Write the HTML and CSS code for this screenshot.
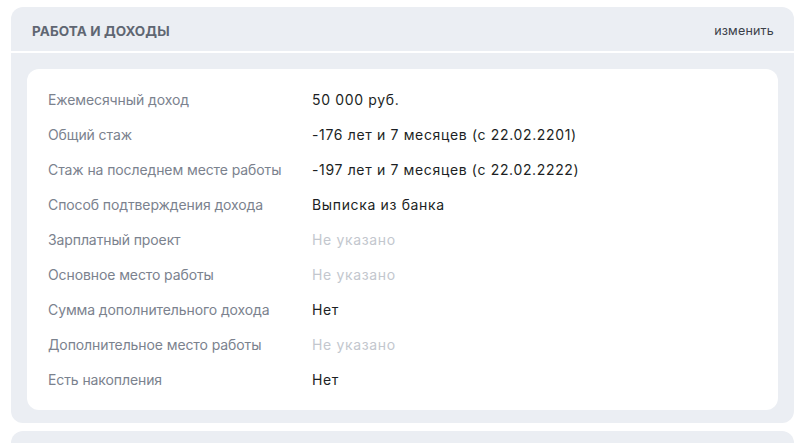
FILE: index.html
```html
<!DOCTYPE html>
<html lang="ru">
<head>
<meta charset="utf-8">
<link rel="stylesheet" href="styles.css">
</head>
<body>
<div class="page">
  <section class="card">
    <header class="card-head">
      <h2 class="card-title">РАБОТА И ДОХОДЫ</h2>
      <a class="card-edit">изменить</a>
    </header>
    <div class="card-body">
      <div class="panel">
        <div class="row"><span class="label">Ежемесячный доход</span><span class="value">50 000 руб.</span></div>
        <div class="row"><span class="label">Общий стаж</span><span class="value">-176 лет и 7 месяцев (с 22.02.2201)</span></div>
        <div class="row"><span class="label">Стаж на последнем месте работы</span><span class="value">-197 лет и 7 месяцев (с 22.02.2222)</span></div>
        <div class="row"><span class="label">Способ подтверждения дохода</span><span class="value">Выписка из банка</span></div>
        <div class="row"><span class="label">Зарплатный проект</span><span class="value empty">Не указано</span></div>
        <div class="row"><span class="label">Основное место работы</span><span class="value empty">Не указано</span></div>
        <div class="row"><span class="label">Сумма дополнительного дохода</span><span class="value">Нет</span></div>
        <div class="row"><span class="label">Дополнительное место работы</span><span class="value empty">Не указано</span></div>
        <div class="row"><span class="label">Есть накопления</span><span class="value">Нет</span></div>
      </div>
    </div>
  </section>
  <section class="card card-next"></section>
</div>
</body>
</html>
```
FILE: styles.css
```css
html, body {
  margin: 0;
  padding: 0;
  background: #ffffff;
}
body {
  font-family: Inter, "Noto Sans", sans-serif;
  -webkit-font-smoothing: antialiased;
}
.page {
  padding: 7px 5px 0 11px;
  display: flex;
  flex-direction: column;
  gap: 8px;
}
.card {
  background: #ebeef3;
  border-radius: 12px;
  overflow: hidden;
}
.card-head {
  height: 46px;
  display: flex;
  align-items: center;
  justify-content: space-between;
  padding: 3px 20px 0 21px;
  box-sizing: border-box;
  border-bottom: 2px solid #ffffff;
}
.card-title {
  margin: 0;
  font-size: 13.5px;
  font-weight: 700;
  color: #5f6672;
  letter-spacing: 0.1px;
}
.card-edit {
  font-size: 12.5px;
  color: #3b4049;
  letter-spacing: 0.2px;
  cursor: pointer;
}
.card-body {
  padding: 16px 16px 13px 16px;
}
.panel {
  background: #ffffff;
  border-radius: 12px;
  padding: 13px 21px 13px 21px;
  display: flex;
  flex-direction: column;
}
.row {
  height: 35px;
  display: flex;
  align-items: center;
  font-size: 14px;
}
.label {
  width: 264px;
  flex: none;
  color: #7b828e;
  letter-spacing: -0.1px;
}
.value {
  color: #1c1f24;
  letter-spacing: 0.65px;
}
.value.empty {
  color: #c3c7ce;
}
.card-next {
  height: 40px;
}
```
